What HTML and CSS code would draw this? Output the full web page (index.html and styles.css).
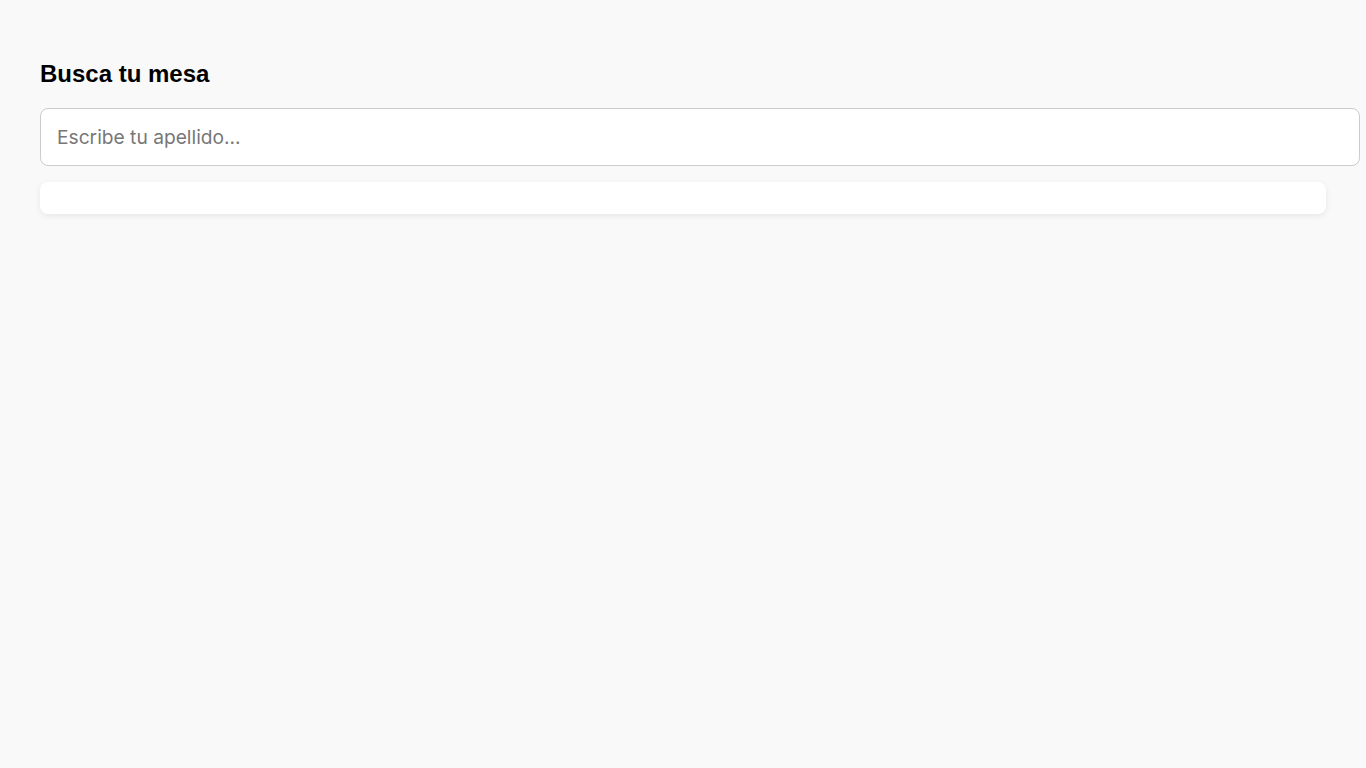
FILE: index.html
```html
<!doctype html>

<html lang="es">
<head>
  <meta charset="utf-8">
  <meta name="viewport" content="width=device-width, initial-scale=1">

  <title>Busca tu mesa</title>

  <link rel="stylesheet" href="styles.css">
</head>
<body>
  <main>
    <h2>Busca tu mesa</h2>
    <input type="text" id="search" placeholder="Escribe tu apellido...">
    <div class="results"></div>
  </main>
</body>
</html>
```

FILE: styles.css
```css
body {
  background-color: #f9f9f9;
  color: #000;
  font-family: "Liberation Sans", Arial, sans-serif;
  margin: 0;
  padding: 40px;
}
h2 {
  font-size: 24px;
}
#search {
  border: 1px solid #ccc;
  border-radius: 8px;
  color: #333;
  display: block;
  font-family: Inter, sans-serif;
  font-size: 19.2px;
  line-height: 24px;
  padding: 16px;
  width: 100%;
}
#search::placeholder {
  color: #777;
}
.results {
  background-color: white;
  border-radius: 8px;
  box-shadow: 0 2px 6px rgba(0, 0, 0, .08);
  height: 32px;
  margin-top: 16px;
}
```
